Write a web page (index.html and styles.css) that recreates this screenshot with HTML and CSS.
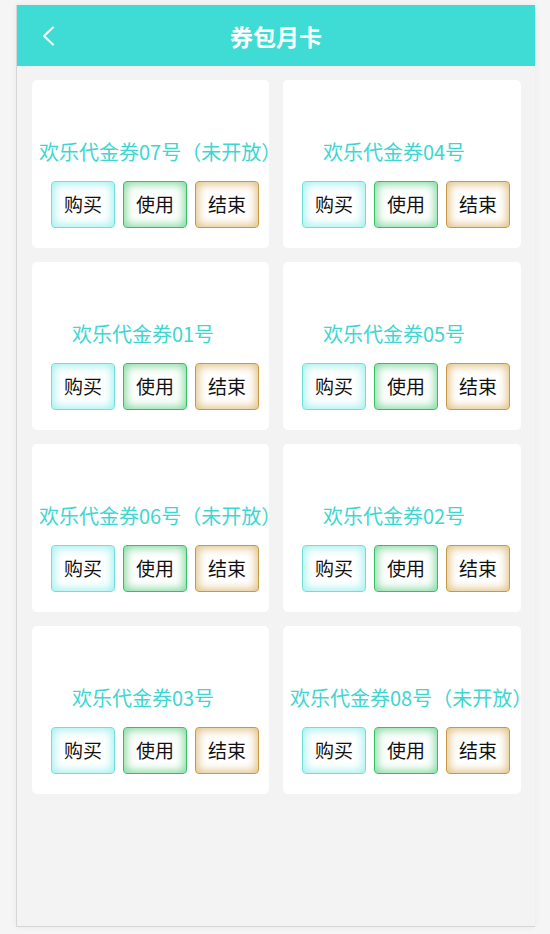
FILE: index.html
```html
<!DOCTYPE html>
<html lang="zh-CN">
<head>
<meta charset="utf-8">
<title>券包月卡</title>
<link rel="stylesheet" href="styles.css">
</head>
<body>
<div class="app">
  <header class="topbar">
    <span class="back"><svg width="14" height="20" viewBox="0 0 14 20"><path d="M12 1.5 L3 10 L12 18.5" fill="none" stroke="#fff" stroke-width="2" stroke-linecap="round" stroke-linejoin="round"/></svg></span>
    <h1 class="title">券包月卡</h1>
  </header>
  <main class="grid">
    <div class="card"><div class="name">欢乐代金券07号（未开放）</div><div class="btns"><span class="btn buy">购买</span><span class="btn use">使用</span><span class="btn end">结束</span></div></div>
    <div class="card"><div class="name">欢乐代金券04号</div><div class="btns"><span class="btn buy">购买</span><span class="btn use">使用</span><span class="btn end">结束</span></div></div>
    <div class="card"><div class="name">欢乐代金券01号</div><div class="btns"><span class="btn buy">购买</span><span class="btn use">使用</span><span class="btn end">结束</span></div></div>
    <div class="card"><div class="name">欢乐代金券05号</div><div class="btns"><span class="btn buy">购买</span><span class="btn use">使用</span><span class="btn end">结束</span></div></div>
    <div class="card"><div class="name">欢乐代金券06号（未开放）</div><div class="btns"><span class="btn buy">购买</span><span class="btn use">使用</span><span class="btn end">结束</span></div></div>
    <div class="card"><div class="name">欢乐代金券02号</div><div class="btns"><span class="btn buy">购买</span><span class="btn use">使用</span><span class="btn end">结束</span></div></div>
    <div class="card"><div class="name">欢乐代金券03号</div><div class="btns"><span class="btn buy">购买</span><span class="btn use">使用</span><span class="btn end">结束</span></div></div>
    <div class="card"><div class="name">欢乐代金券08号（未开放）</div><div class="btns"><span class="btn buy">购买</span><span class="btn use">使用</span><span class="btn end">结束</span></div></div>
  </main>
</div>
</body>
</html>
```
FILE: styles.css
```css
* { box-sizing: border-box; }
html, body { margin: 0; padding: 0; }
body {
  background: #f5f5f5;
  font-family: "Noto Sans CJK SC", "Noto Sans", sans-serif;
  width: 550px;
  height: 934px;
  overflow: hidden;
}
.app {
  margin: 5px 15px 0 16px;
  width: 519px;
  height: 922px;
  background: #f3f3f3;
  border-left: 1px solid #d6d6d6;
  border-bottom: 1px solid #d6d6d6;
  box-shadow: 0 0 6px rgba(0,0,0,0.06);
}
.topbar {
  height: 61px;
  background: #3fdcd6;
  display: flex;
  align-items: center;
  justify-content: center;
  position: relative;
}
.back {
  position: absolute;
  left: 24px;
  top: 21px;
  width: 14px;
  height: 20px;
  display: block;
}
.back svg { display: block; }
.title {
  margin: 0;
  color: #fff;
  font-size: 23px;
  font-weight: bold;
  line-height: 30px;
}
.grid {
  display: grid;
  grid-template-columns: 237px 238px;
  column-gap: 14px;
  row-gap: 14px;
  padding: 14px 14px 0 15px;
}
.card {
  background: #fff;
  border-radius: 5px;
  height: 168px;
  overflow: hidden;
  padding-top: 58px;
}
.name {
  margin-left: 7px;
  width: 208px;
  text-align: center;
  white-space: nowrap;
  font-size: 20px;
  line-height: 28px;
  color: #3ed6d0;
}
.btns {
  display: flex;
  gap: 8px;
  margin-top: 15px;
  margin-left: 19px;
}
.btn {
  width: 64px;
  height: 47px;
  border-radius: 4px;
  display: flex;
  align-items: center;
  justify-content: center;
  font-size: 19px;
  line-height: 1;
  padding-bottom: 2px;
  color: #111;
  background: #fff;
}
.buy {
  border: 1px solid #70dfdb;
  box-shadow: inset 0 0 10px 2px #9ff0ee;
}
.use {
  border: 1px solid #35c066;
  box-shadow: inset 0 0 10px 2px #7fd89c;
}
.end {
  border: 1px solid #c69a42;
  box-shadow: inset 0 0 10px 2px #e0c084;
}
```
